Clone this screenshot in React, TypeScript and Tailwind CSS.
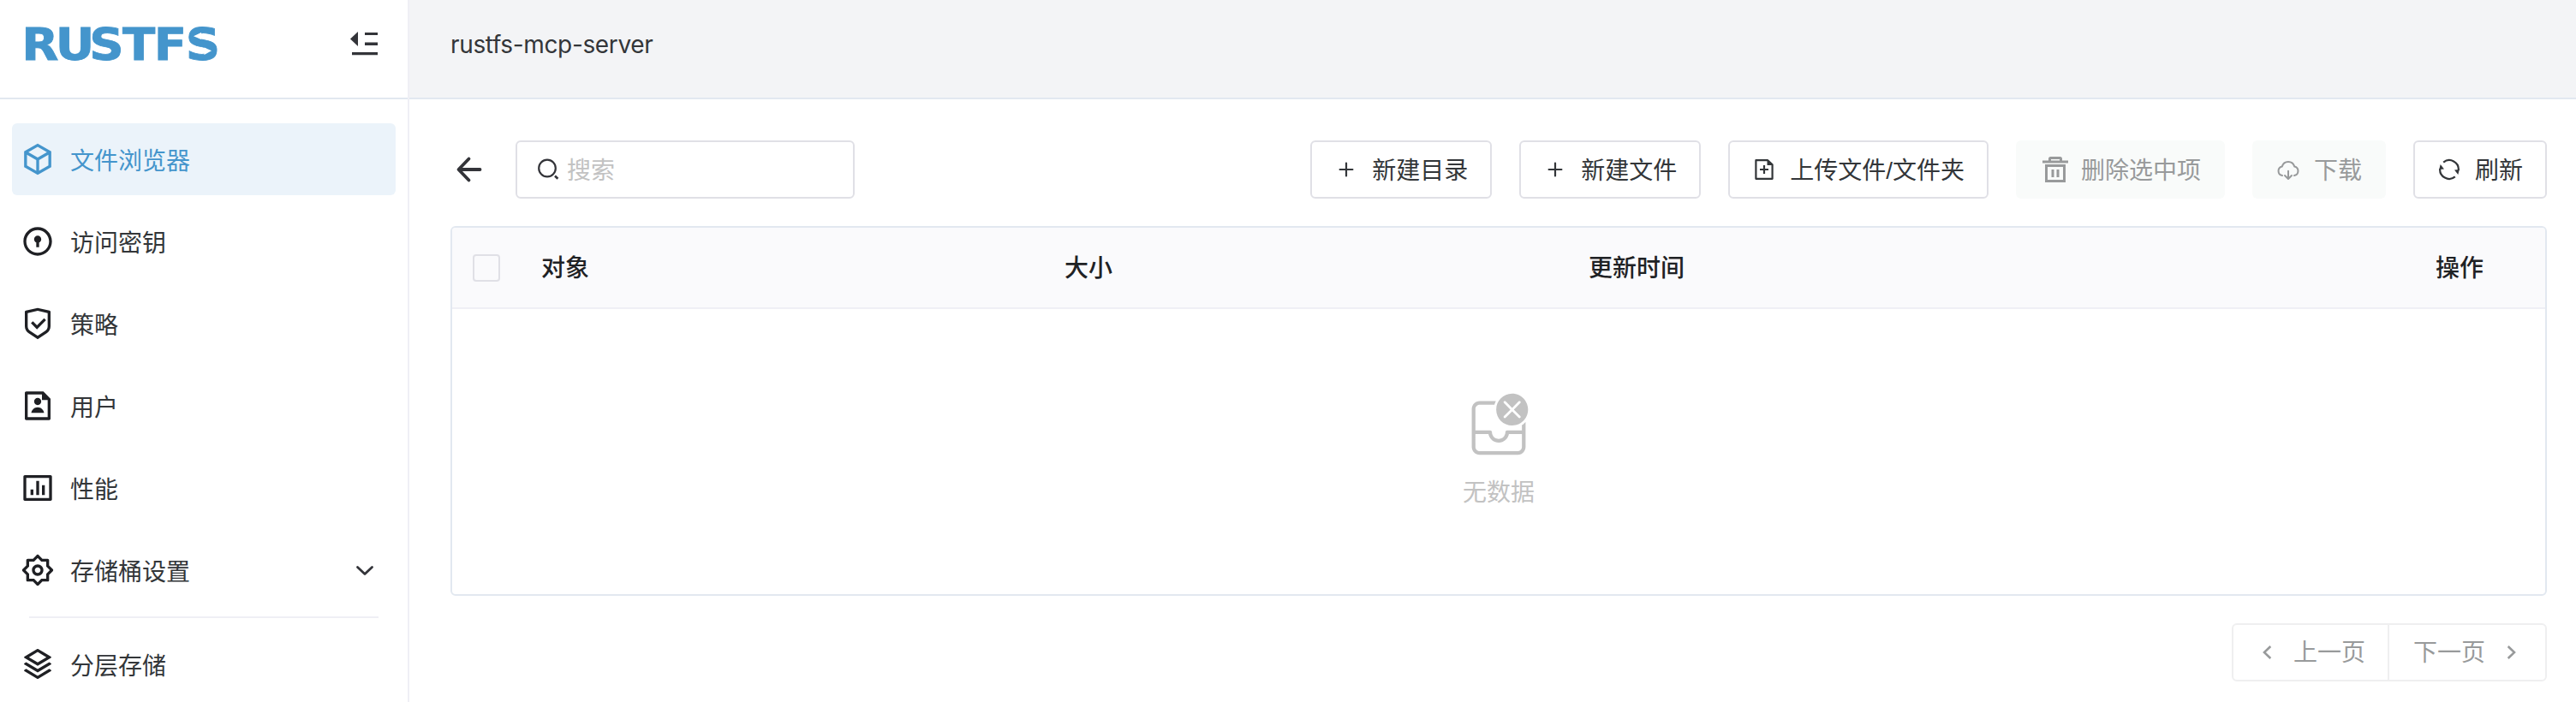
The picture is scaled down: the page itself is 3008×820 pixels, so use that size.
import type { ReactNode } from 'react';
import { RiBox3Line, RiDoorLockLine, RiShieldCheckLine, RiFileUserLine, RiBarChartBoxLine, RiStackLine } from 'react-icons/ri';

function Logo() {
  return (
    <svg width="250" height="60" viewBox="0 -15 250 60" className="block overflow-visible">
      <text
        x="4.8 40.8 76.5 111.9 145.2 178.9"
        y="39.6"
        transform="scale(1.1 1)"
        fontFamily="'DejaVu Sans'"
        fontWeight="700"
        fontSize="51"
        fill="#4495cc"
        stroke="#4495cc"
        strokeWidth="0.8"
      >
        RUSTFS
      </text>
      <path d="M206 12.3 L215 8 V16 Z M227 29.3 L218.5 25.5 V34 Z" fill="#fff" />
    </svg>
  );
}

function CollapseIcon() {
  return (
    <svg width="32" height="30" viewBox="0 0 32 30" fill="#333439">
      <path d="M9 1 V18 L0 9.5 Z" />
      <path d="M17 2 H32 V5 H17 Z M17 13.5 H32 V17 H17 Z M2 25 H32 V28.3 H2 Z" />
    </svg>
  );
}

function GearIcon() {
  return (
    <svg width="40" height="40" viewBox="0 0 24 24" fill="currentColor">
      <path d="M8.68637 4.00008L11.293 1.39348C11.6835 1.00295 12.3167 1.00295 12.7072 1.39348L15.3138 4.00008H19.0001C19.5524 4.00008 20.0001 4.4478 20.0001 5.00008V8.68637L22.6067 11.293C22.9972 11.6835 22.9972 12.3167 22.6067 12.7072L20.0001 15.3138V19.0001C20.0001 19.5524 19.5524 20.0001 19.0001 20.0001H15.3138L12.7072 22.6067C12.3167 22.9972 11.6835 22.9972 11.293 22.6067L8.68637 20.0001H5.00008C4.4478 20.0001 4.00008 19.5524 4.00008 19.0001V15.3138L1.39348 12.7072C1.00295 12.3167 1.00295 11.6835 1.39348 11.293L4.00008 8.68637V5.00008C4.00008 4.4478 4.4478 4.00008 5.00008 4.00008H8.68637ZM6.00008 6.00008V9.5148L3.5148 12.0001L6.00008 14.4854V18.0001H9.5148L12.0001 20.4854L14.4854 18.0001H18.0001V14.4854L20.4854 12.0001L18.0001 9.5148V6.00008H14.4854L12.0001 3.5148L9.5148 6.00008H6.00008ZM12 16C9.79 16 8 14.21 8 12C8 9.79 9.79 8 12 8C14.21 8 16 9.79 16 12C16 14.21 14.21 16 12 16ZM12 14C13.1 14 14 13.1 14 12C14 10.9 13.1 10 12 10C10.9 10 10 10.9 10 12C10 13.1 10.9 14 12 14Z" />
    </svg>
  );
}

function PlusIcon() {
  return (
    <svg width="28" height="28" viewBox="0 0 28 28" stroke="currentColor" strokeWidth="2.2" strokeLinecap="round">
      <path d="M14 6.6 V21.4 M6.6 14 H21.4" />
    </svg>
  );
}

function FileAddIcon() {
  return (
    <svg width="28" height="28" viewBox="0 0 28 28" fill="none" stroke="currentColor" strokeWidth="2.2">
      <path d="M4.4 3.2 H18.2 L23.6 8.4 V24.8 H4.4 Z" strokeLinejoin="round" />
      <path d="M17.5 3 V9 H24 Z" fill="currentColor" stroke="none" />
      <path d="M14 9 V19 M9 14 H19" />
    </svg>
  );
}

function TrashIcon() {
  return (
    <svg width="36" height="36" viewBox="0 0 36 36" fill="none" stroke="currentColor" strokeWidth="3">
      <path d="M3 9 H33" />
      <path d="M11.5 8 V5.5 Q11.5 4.5 12.5 4.5 H23.5 Q24.5 4.5 24.5 5.5 V8" />
      <path d="M7.5 13.5 H28.5 V31.5 H7.5 Z" />
      <path d="M15 18 V27 M21 18 V27" />
    </svg>
  );
}

function CloudDownloadIcon() {
  return (
    <svg width="28" height="28" viewBox="0 0 28 28" fill="none" stroke="currentColor" strokeWidth="2" strokeLinecap="round" strokeLinejoin="round">
      <path d="M7 21 A5.4 5.4 0 0 1 6.8 10.4 A7.5 7.5 0 0 1 21.2 10.4 A5.4 5.4 0 0 1 21 21" />
      <path d="M14 15.8 V24.6 M10 21 L14 25 L18 21" />
    </svg>
  );
}

function RefreshIcon() {
  return (
    <svg width="28" height="28" viewBox="0 0 28 28" fill="none" stroke="currentColor" strokeWidth="2.2">
      <path d="M7.2 5.6 A10.8 10.8 0 0 1 24.8 15" />
      <path d="M20.8 22.4 A10.8 10.8 0 0 1 3.2 13" />
      <path d="M20 14.5 L25.8 14 L24.3 20 Z M8 13.5 L2.2 14 L3.7 8 Z" fill="currentColor" stroke="none" />
    </svg>
  );
}

function SearchIcon() {
  return (
    <svg width="26" height="26" viewBox="0 0 26 26" fill="none" stroke="#333439" strokeWidth="2.2">
      <circle cx="11" cy="11.5" r="9.8" />
      <path d="M20 20.5 L23.4 23.8" strokeWidth="2.6" />
    </svg>
  );
}

function EmptyIcon() {
  return (
    <svg width="80" height="80" viewBox="0 0 28 28" fill="#c2c2c2">
      <path d="M26 7.5C26 11.0899 23.0899 14 19.5 14C15.9101 14 13 11.0899 13 7.5C13 3.91015 15.9101 1 19.5 1C23.0899 1 26 3.91015 26 7.5ZM16.8536 4.14645C16.6583 3.95118 16.3417 3.95118 16.1464 4.14645C15.9512 4.34171 15.9512 4.65829 16.1464 4.85355L18.7929 7.5L16.1464 10.1464C15.9512 10.3417 15.9512 10.6583 16.1464 10.8536C16.3417 11.0488 16.6583 11.0488 16.8536 10.8536L19.5 8.20711L22.1464 10.8536C22.3417 11.0488 22.6583 11.0488 22.8536 10.8536C23.0488 10.6583 23.0488 10.3417 22.8536 10.1464L20.2071 7.5L22.8536 4.85355C23.0488 4.65829 23.0488 4.34171 22.8536 4.14645C22.6583 3.95118 22.3417 3.95118 22.1464 4.14645L19.5 6.79289L16.8536 4.14645Z" />
      <path d="M25 22.75V12.5991C24.5572 13.0765 24.053 13.4961 23.5 13.8454V16H17.5L17.3982 16.0068C17.0322 16.0565 16.75 16.3703 16.75 16.75C16.75 18.2688 15.5188 19.5 14 19.5C12.4812 19.5 11.25 18.2688 11.25 16.75L11.2432 16.6482C11.1935 16.2822 10.8797 16 10.5 16H4.5V7.25C4.5 6.2835 5.2835 5.5 6.25 5.5H12.2696C12.4146 4.97463 12.6153 4.47237 12.865 4H6.25C4.45507 4 3 5.45507 3 7.25V22.75C3 24.5449 4.45507 26 6.25 26H21.75C23.5449 26 25 24.5449 25 22.75ZM4.5 22.75V17.5H9.81597L9.85751 17.7041C10.2905 19.5919 11.9808 21 14 21L14.215 20.9947C16.2095 20.8953 17.842 19.4209 18.184 17.5H23.5V22.75C23.5 23.7165 22.7165 24.5 21.75 24.5H6.25C5.2835 24.5 4.5 23.7165 4.5 22.75Z" />
    </svg>
  );
}

function Chevron({ d }: { d: string }) {
  return (
    <svg width="28" height="28" viewBox="0 0 28 28" fill="none" stroke="currentColor" strokeWidth="2.6">
      <path d={d} />
    </svg>
  );
}

type NavItemProps = { icon: ReactNode; label: string; active?: boolean; expandable?: boolean };

function NavItem({ icon, label, active, expandable }: NavItemProps) {
  return (
    <a
      className={
        active
          ? 'flex h-[84px] items-center rounded-md bg-[#ebf3fa] pr-6 pl-2.5 text-[#4495cc]'
          : 'flex h-[84px] items-center rounded-md pr-6 pl-2.5 text-[#1f2024]'
      }
    >
      <span className="flex w-10 shrink-0">{icon}</span>
      <span className={active ? 'ml-[18px] flex-1 pt-[3px]' : 'ml-[18px] flex-1 pt-[3px] text-[#333639]'}>{label}</span>
      {expandable && (
        <svg width="24" height="24" viewBox="0 0 24 24" fill="none" stroke="#333439" strokeWidth="2.8" strokeLinecap="round" strokeLinejoin="round">
          <path d="M3.5 8.5 L12 16.6 L20.5 8.5" />
        </svg>
      )}
    </a>
  );
}

type ToolButtonProps = { icon: ReactNode; label: string; disabled?: boolean; wide?: boolean };

function ToolButton({ icon, label, disabled, wide }: ToolButtonProps) {
  return (
    <button
      className={
        disabled
          ? 'flex h-[68px] items-center rounded-md bg-[#f9fbfa] px-7 whitespace-nowrap text-[#989a9b]'
          : 'flex h-[68px] items-center rounded-md border-2 border-[#e0e0e6] px-[26px] whitespace-nowrap text-[#333639]'
      }
    >
      <span className={wide ? 'mr-3 flex' : 'mr-4 flex'}>{icon}</span>
      <span className="pt-[3px] font-['Liberation_Sans','Noto_Sans_CJK_SC',sans-serif]">{label}</span>
    </button>
  );
}

export default function App() {
  return (
    <div className="flex h-[820px] w-[3008px] overflow-hidden bg-white font-['Inter','Noto_Sans_CJK_SC',sans-serif] text-[28px] leading-[42px] text-[#333639]">
      <aside className="w-[478px] shrink-0 border-r-2 border-[#efeff5]">
        <div className="flex h-[116px] items-start justify-between border-b-2 border-[#e2e8f0] pr-[35px] pl-5">
          <div className="pt-[15px]">
            <Logo />
          </div>
          <button className="pt-[35.5px]">
            <CollapseIcon />
          </button>
        </div>
        <nav className="flex flex-col gap-3 pt-7 pr-3.5 pl-3.5">
          <NavItem active icon={<RiBox3Line size={40} />} label="文件浏览器" />
          <NavItem icon={<RiDoorLockLine size={40} />} label="访问密钥" />
          <NavItem icon={<RiShieldCheckLine size={40} />} label="策略" />
          <NavItem icon={<RiFileUserLine size={40} />} label="用户" />
          <NavItem icon={<RiBarChartBoxLine size={40} />} label="性能" />
          <NavItem expandable icon={<GearIcon />} label="存储桶设置" />
          <div className="mr-5 ml-5 h-0.5 bg-[#efeff5]" />
          <NavItem icon={<RiStackLine size={40} />} label="分层存储" />
        </nav>
      </aside>

      <main className="min-w-0 flex-1">
        <header className="h-[116px] border-b-2 border-[#e2e8f0] bg-[#f3f4f6] pt-[31px] pl-12 tracking-[-0.35px]">rustfs-mcp-server</header>
        <div className="pt-12 pr-[34px] pl-12">
          <div className="flex items-center">
            <button className="ml-1.5 flex">
              <svg width="32" height="32" viewBox="0 0 32 32" fill="none" stroke="#333439" strokeWidth="3.8" strokeLinecap="round" strokeLinejoin="round">
                <path d="M15.5 3.5 L3.5 16 L15.5 28.5 M4 16 H28.5" />
              </svg>
            </button>
            <div className="ml-[38px] flex h-[68px] w-[396px] items-center rounded-md border-2 border-[#e0e0e6] pl-6">
              <SearchIcon />
              <span className="ml-2 pt-0.5 text-[#c2c2c2]">搜索</span>
            </div>
            <div className="ml-auto flex gap-8">
              <ToolButton icon={<PlusIcon />} label="新建目录" />
              <ToolButton icon={<PlusIcon />} label="新建文件" />
              <ToolButton icon={<FileAddIcon />} label="上传文件/文件夹" />
              <ToolButton disabled wide icon={<TrashIcon />} label="删除选中项" />
              <ToolButton disabled icon={<CloudDownloadIcon />} label="下载" />
              <ToolButton icon={<RefreshIcon />} label="刷新" />
            </div>
          </div>

          <section className="mt-8 h-[432px] overflow-hidden rounded-md border-2 border-[#e2e8f0]">
            <div className="grid h-[95px] grid-cols-[80px_611px_612px_1fr_200px] items-center border-b-2 border-[#efeff5] bg-[#fafafc] font-medium text-[#1f2225]">
              <div className="ml-6 h-8 w-8 rounded-[4px] border-2 border-[#e0e0e6]" />
              <div className="pl-6">对象</div>
              <div className="pl-6">大小</div>
              <div className="pl-6">更新时间</div>
              <div className="pr-[72px] text-right">操作</div>
            </div>
            <div className="flex flex-col items-center pt-24 text-[#c2c2c2]">
              <EmptyIcon />
              <div className="mt-[17px]">无数据</div>
            </div>
          </section>

          <div className="mt-8 flex justify-end text-[#989a9b]">
            <div className="flex h-[68px] rounded-md border-2 border-[#efeff0]">
              <button className="flex w-[182px] items-center border-r-2 border-[#efeff0] pl-[26px]">
                <Chevron d="M17.3 7 L10 14 L17.3 21" />
                <span className="ml-4">上一页</span>
              </button>
              <button className="flex w-[182px] items-center justify-end pr-[26px]">
                <span className="mr-4">下一页</span>
                <Chevron d="M10.7 7 L18 14 L10.7 21" />
              </button>
            </div>
          </div>
        </div>
      </main>
    </div>
  );
}
